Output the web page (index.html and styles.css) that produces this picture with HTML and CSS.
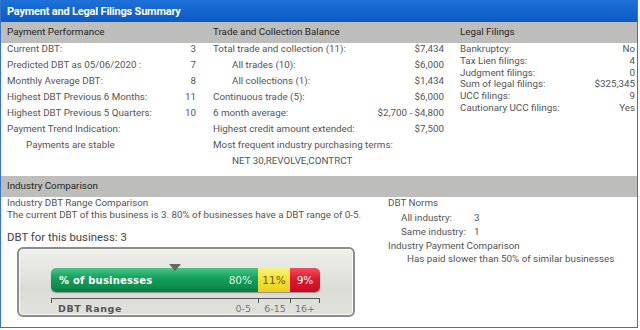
FILE: index.html
```html
<!DOCTYPE html>
<html>
<head>
<meta charset="utf-8">
<link rel="stylesheet" href="styles.css">
</head>
<body>
<div class="panel">
  <div class="title">Payment and Legal Filings Summary</div>
  <div class="cols">
    <div class="col col1">
      <div class="head">Payment Performance</div>
      <div class="rows">
        <div class="row"><span>Current DBT:</span><span>3</span></div>
        <div class="row"><span>Predicted DBT as 05/06/2020 :</span><span>7</span></div>
        <div class="row"><span>Monthly Average DBT:</span><span>8</span></div>
        <div class="row"><span>Highest DBT Previous 6 Months:</span><span>11</span></div>
        <div class="row"><span>Highest DBT Previous 5 Quarters:</span><span>10</span></div>
        <div class="row"><span>Payment Trend Indication:</span></div>
        <div class="row indent"><span>Payments are stable</span></div>
      </div>
    </div>
    <div class="col col2">
      <div class="head">Trade and Collection Balance</div>
      <div class="rows">
        <div class="row"><span>Total trade and collection (11):</span><span>$7,434</span></div>
        <div class="row indent"><span>All trades (10):</span><span>$6,000</span></div>
        <div class="row indent"><span>All collections (1):</span><span>$1,434</span></div>
        <div class="row"><span>Continuous trade (5):</span><span>$6,000</span></div>
        <div class="row"><span>6 month average:</span><span>$2,700 - $4,800</span></div>
        <div class="row"><span>Highest credit amount extended:</span><span>$7,500</span></div>
        <div class="row"><span>Most frequent industry purchasing terms:</span></div>
        <div class="row indent"><span>NET 30,REVOLVE,CONTRCT</span></div>
      </div>
    </div>
    <div class="col col3">
      <div class="head">Legal Filings</div>
      <div class="rows tight">
        <div class="row"><span>Bankruptcy:</span><span>No</span></div>
        <div class="row"><span>Tax Lien filings:</span><span>4</span></div>
        <div class="row"><span>Judgment filings:</span><span>0</span></div>
        <div class="row"><span>Sum of legal filings:</span><span>$325,345</span></div>
        <div class="row"><span>UCC filings:</span><span>9</span></div>
        <div class="row"><span>Cautionary UCC filings:</span><span>Yes</span></div>
      </div>
    </div>
  </div>
  <div class="head full">Industry Comparison</div>
  <div class="industry">
    <div class="ind-left">
      <div class="line">Industry DBT Range Comparison</div>
      <div class="line">The current DBT of this business is 3. 80% of businesses have a DBT range of 0-5.</div>
      <div class="big">DBT for this business: 3</div>
      <div class="gauge">
        <div class="bar-wrap">
          <div class="marker"></div>
          <div class="bar">
            <div class="seg green"><span class="lbl">% of businesses</span><span>80%</span></div>
            <div class="seg yellow">11%</div>
            <div class="seg red">9%</div>
          </div>
          <div class="scale">
            <div class="sc sc1"><span class="lbl2">DBT Range</span><span>0-5</span></div>
            <div class="sc sc2">6-15</div>
            <div class="sc sc3">16+</div>
          </div>
        </div>
      </div>
    </div>
    <div class="ind-right">
      <div class="line">DBT Norms</div>
      <div class="norm first"><span class="nk">All industry:</span><span>3</span></div>
      <div class="norm"><span class="nk">Same industry:</span><span>1</span></div>
      <div class="norm">Industry Payment Comparison</div>
      <div class="line sub">Has paid slower than 50% of similar businesses</div>
    </div>
  </div>
</div>
</body>
</html>
```

FILE: styles.css
```css
* { box-sizing: border-box; }
body {
  margin: 0;
  background: #ffffff;
  font-family: Roboto, "Liberation Sans", sans-serif;
  font-size: 9.8px;
  color: #555;
}
.panel {
  width: 638px;
  height: 328px;
  border: 1px solid #3a74c4;
  border-top: none;
  background: #fff;
}
.title {
  height: 22px;
  line-height: 23px;
  padding-left: 6px;
  color: #fff;
  font-weight: bold;
  font-size: 11px;
  letter-spacing: -0.2px;
  background: linear-gradient(#1d71d8, #0b5cc4);
  border-bottom: 1px solid #1d5aa8;
}
.head {
  height: 21px;
  line-height: 20px;
  background: #bdbdbb;
  color: #262626;
  font-size: 9.8px;
  padding-left: 6px;
}
.cols {
  display: grid;
  grid-template-columns: 206px 247px 1fr;
  height: 154px;
}
.rows { padding: 0 10px 0 6px; }
.col1 .rows { padding-right: 11px; }
.col3 .rows { padding-right: 2px; }
.row {
  display: flex;
  justify-content: space-between;
  line-height: 12px;
  height: 12px;
  margin-bottom: 4px;
  white-space: nowrap;
}
.row.indent { padding-left: 19px; }
.tight .row { height: 11.8px; line-height: 11.8px; margin-bottom: 0; }
.industry {
  display: grid;
  grid-template-columns: 381px 1fr;
}
.ind-left { padding-left: 6px; }
.line { line-height: 12px; white-space: nowrap; }
.big {
  font-size: 11.4px;
  line-height: 16px;
  margin-top: 8px;
  color: #444;
}
.gauge {
  margin-top: 2px;
  margin-left: 10px;
  width: 338px;
  height: 70px;
  border: 2px solid #8d8d8a;
  border-radius: 6px;
  background: linear-gradient(#efefec, #dcdcd7 60%, #e2e2dd);
  box-shadow: inset 0 0 0 1px #f8f8f6;
  padding: 19px 0 0 32px;
}
.bar-wrap { position: relative; width: 269px; }
.marker {
  position: absolute;
  left: 118px;
  top: -4px;
  width: 0; height: 0;
  border-left: 6px solid transparent;
  border-right: 6px solid transparent;
  border-top: 7px solid #666;
  z-index: 2;
}
.bar {
  display: flex;
  height: 24px;
  border-radius: 5px;
  overflow: hidden;
  box-shadow: 0 1px 1px rgba(0,0,0,0.35);
  font-family: "DejaVu Sans", Verdana, sans-serif;
  font-size: 10.5px;
}
.seg {
  display: flex;
  align-items: center;
  justify-content: center;
  height: 24px;
}
.green {
  width: 207px;
  justify-content: space-between;
  padding: 0 6px 0 8px;
  color: #dff5e8;
  background: linear-gradient(#4cc487 0%, #1aa764 35%, #139a59 50%, #10904f 75%, #0a7a42 100%);
}
.green .lbl { font-weight: bold; color: #fff; font-size: 10px; letter-spacing: 0.2px; }
.yellow {
  width: 32px;
  color: #6a5a10;
  background: linear-gradient(#fbf27a 0%, #f5e23a 45%, #ecd020 100%);
}
.red {
  width: 30px;
  color: #fff;
  background: linear-gradient(#f2505c 0%, #e01830 45%, #c40c22 100%);
}
.scale {
  display: flex;
  margin-top: 6px;
  border-top: 1px solid #555;
  height: 18px;
  font-family: "DejaVu Sans", Verdana, sans-serif;
  font-size: 9.5px;
  color: #777;
}
.sc {
  border-left: 1px solid #555;
  height: 4px;
  line-height: 19px;
  overflow: visible;
  white-space: nowrap;
}
.sc1 {
  width: 207px;
  display: flex;
  justify-content: space-between;
  padding: 0 7px 0 6px;
}
.sc2 { width: 32px; text-align: center; padding-left: 1px; }
.sc3 { width: 30px; text-align: center; border-right: 1px solid #555; }
.lbl2 { font-weight: bold; color: #555; letter-spacing: 0.6px; }
.ind-right { padding-left: 6px; }
.norm { line-height: 14px; white-space: nowrap; display: flex; }
.norm.first { margin-top: 2px; }
.norm .nk { width: 73px; margin-left: 13px; }
.sub { padding-left: 19px; }
```
